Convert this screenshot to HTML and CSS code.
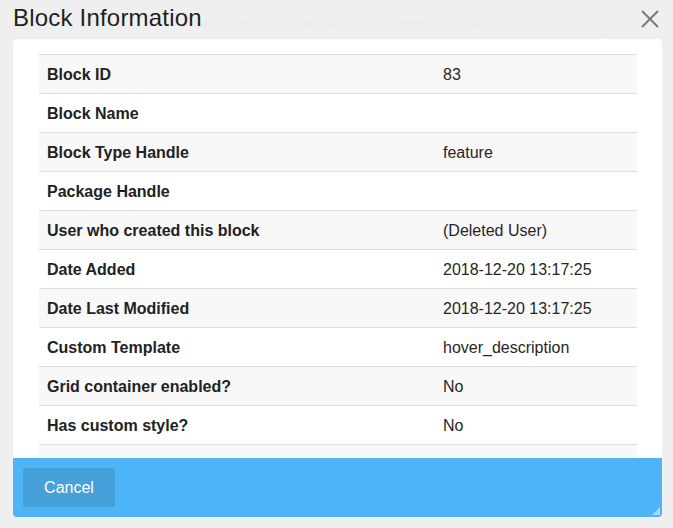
FILE: index.html
```html
<!DOCTYPE html>
<html>
<head>
<meta charset="utf-8">
<link rel="stylesheet" href="styles.css">
</head>
<body>
<div class="backdrop">
  <nav class="bg-nav">
    <span>Services</span><span>Portfolio</span><span>Team</span><span>Blog</span>
  </nav>
  <div class="bg-search"></div>
</div>
<div class="dialog">
  <div class="titlebar">
    <h1 class="title">Block Information</h1>
    <button class="close" aria-label="Close">
      <svg width="18" height="18" viewBox="0 0 18 18"><path d="M1 1L17 17M17 1L1 17" stroke="#7a7a7a" stroke-width="2" fill="none"/></svg>
    </button>
  </div>
  <div class="content">
    <table class="info">
      <tr><th>Block ID</th><td>83</td></tr>
      <tr><th>Block Name</th><td></td></tr>
      <tr><th>Block Type Handle</th><td>feature</td></tr>
      <tr><th>Package Handle</th><td></td></tr>
      <tr><th>User who created this block</th><td>(Deleted User)</td></tr>
      <tr><th>Date Added</th><td>2018-12-20 13:17:25</td></tr>
      <tr><th>Date Last Modified</th><td>2018-12-20 13:17:25</td></tr>
      <tr><th>Custom Template</th><td>hover_description</td></tr>
      <tr><th>Grid container enabled?</th><td>No</td></tr>
      <tr><th>Has custom style?</th><td>No</td></tr>
      <tr><th>&nbsp;</th><td></td></tr>
    </table>
  </div>
  <div class="footer">
    <button class="cancel">Cancel</button>
    <svg class="grip" width="8" height="8" viewBox="0 0 8 8"><path d="M8 0L8 8L0 8Z" fill="#a9d9fb"/></svg>
  </div>
</div>
</body>
</html>
```
FILE: styles.css
```css
html, body {
  margin: 0;
  padding: 0;
}
body {
  background: #efefef;
  font-family: "Liberation Sans", Arial, sans-serif;
  width: 673px;
  height: 528px;
  overflow: hidden;
  position: relative;
}
.backdrop {
  position: absolute;
  inset: 0;
  z-index: 0;
}
.bg-nav {
  position: absolute;
  left: 193px;
  top: 15px;
  display: flex;
  gap: 40px;
  font-size: 14px;
  font-weight: bold;
  color: #e8edf2;
}
.bg-search {
  position: absolute;
  left: 603px;
  top: 3px;
  width: 90px;
  height: 42px;
  border: 1px solid #ececec;
  border-radius: 22px;
}
.dialog {
  position: relative;
  z-index: 1;
  margin-left: 13px;
  width: 649px;
  display: flex;
  flex-direction: column;
}
.titlebar {
  height: 39px;
  display: flex;
  align-items: flex-start;
  justify-content: space-between;
}
.title {
  margin: 0;
  font-size: 24px;
  font-weight: normal;
  color: #1f1f1f;
  line-height: 36px;
  letter-spacing: 0.2px;
}
.close {
  border: 0;
  background: none;
  padding: 0;
  margin-top: 10px;
  margin-right: 3px;
  width: 18px;
  height: 18px;
  display: flex;
}
.content {
  background: #fff;
  border-radius: 4px 4px 0 0;
  height: 419px;
  box-sizing: border-box;
  padding: 15px 25px 0 26px;
  overflow: hidden;
}
.info {
  width: 100%;
  border-collapse: collapse;
  font-size: 16px;
  color: #222;
}
.info th, .info td {
  padding: 9px 8px 7px;
  height: 22px;
  line-height: 22px;
  border-top: 1px solid #dddddd;
  text-align: left;
  vertical-align: top;
}
.info th {
  width: 380px;
  font-weight: bold;
}
.info td {
  color: #262626;
}
.info tr:nth-child(odd) {
  background: #f8f8f8;
}
.footer {
  position: relative;
  background: #4db4f7;
  border-radius: 0 0 4px 4px;
  padding: 10px;
  height: 59px;
  box-sizing: border-box;
}
.cancel {
  display: block;
  height: 39px;
  width: 92px;
  border: 0;
  border-radius: 2px;
  background: #46a1da;
  color: #fff;
  font-family: "Liberation Sans", Arial, sans-serif;
  font-size: 16px;
  padding: 0;
}
.grip {
  position: absolute;
  right: 2px;
  bottom: 2px;
}
```
